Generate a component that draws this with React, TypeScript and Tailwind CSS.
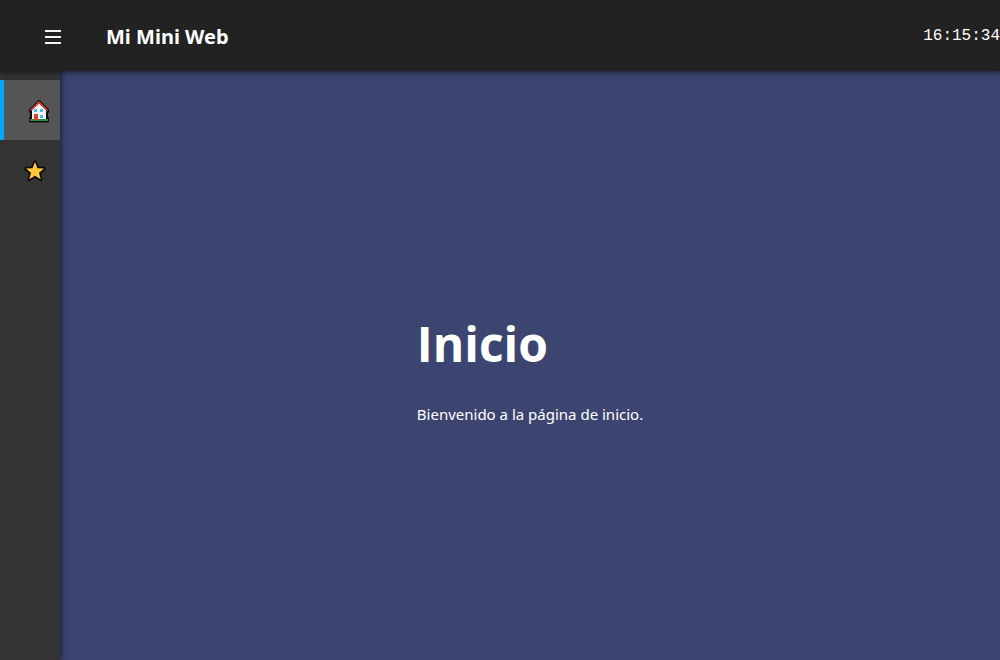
import { useState } from "react";

function HouseIcon() {
  return (
    <svg viewBox="0 0 22 24" className="h-6 w-[22px]" aria-hidden="true">
      <path d="M11 2 2 11v2h1v6H2v3.5h18V19h-1v-6h1v-2Z" fill="#0c0c0c" stroke="#0c0c0c" strokeWidth="2" strokeLinejoin="round" />
      <path d="M4 11 11 4.5 18 11v10H4Z" fill="#f3f3f6" />
      <path d="M2.5 11.5 11 3.2l8.5 8.3" fill="none" stroke="#e2432e" strokeWidth="1.7" />
      <path d="M2 20h18v2H2Z" fill="#23913a" />
      <path d="M6 15h4v6H6Z" fill="#d9442f" />
      <path d="M6 10h3v3H6ZM12 10h3v3h-3ZM12 16h3v3h-3Z" fill="#3fc0f0" />
    </svg>
  );
}

function StarIcon() {
  return (
    <svg viewBox="0 0 22 22" className="size-[22px]" aria-hidden="true">
      <path
        d="m11 2 2.5 6.2 6.5.4-5 4.2 1.7 6.5-5.7-3.5-5.7 3.5L7 12.8 2 8.6l6.5-.4Z"
        fill="#ffc83d"
        stroke="#0b0b0b"
        strokeWidth="3.5"
        strokeLinejoin="round"
        paintOrder="stroke"
      />
    </svg>
  );
}

const pages = [
  { id: "inicio", label: "Inicio", text: "Bienvenido a la página de inicio.", Icon: HouseIcon },
  { id: "favoritos", label: "Favoritos", text: "Tus páginas favoritas.", Icon: StarIcon },
];

export default function App() {
  const [active, setActive] = useState("inicio");
  const page = pages.find((p) => p.id === active) ?? pages[0];

  return (
    <div className="flex min-h-screen flex-col bg-[#3c456f] font-['Noto_Sans','Segoe_UI',sans-serif] text-white">
      <header className="relative z-20 flex h-[71px] items-center bg-[#222] pt-0.5 pl-11 shadow-[0_2px_5px_rgba(0,0,0,0.5)]">
        <button type="button" aria-label="Menú" className="flex h-8 w-[18px] items-center justify-center">
          <svg viewBox="0 0 18 16" className="h-4 w-[18px]" aria-hidden="true">
            <path d="M1 1h16v2H1ZM1 7h16v2H1ZM1 13h16v2H1Z" fill="#f5f5f5" />
          </svg>
        </button>
        <h1 className="ml-11 text-xl font-bold">Mi Mini Web</h1>
        <time className="ml-auto pb-0.5 font-['Liberation_Mono','Courier_New',monospace] text-base">16:15:34</time>
      </header>
      <div className="flex flex-1">
        <nav className="z-10 flex w-15 shrink-0 flex-col bg-[#333] pt-[9px] shadow-[2px_0_5px_rgba(0,0,0,0.5)]">
          {pages.map(({ id, label, Icon }) => (
            <button
              key={id}
              type="button"
              aria-label={label}
              onClick={() => setActive(id)}
              className={
                id === active
                  ? "flex h-15 items-center border-l-4 border-[#00aaff] bg-[#555] pt-0.5 pl-6"
                  : "flex h-15 items-center pt-0.5 pl-6"
              }
            >
              <Icon />
            </button>
          ))}
        </nav>
        <main className="flex flex-1 items-center justify-center">
          <div className="pt-1">
            <h2 className="mb-6 font-['Open_Sans','Segoe_UI',sans-serif] text-5xl leading-[68px] font-bold">{page.label}</h2>
            <p className="text-[15px] leading-6">{page.text}</p>
          </div>
        </main>
      </div>
    </div>
  );
}
